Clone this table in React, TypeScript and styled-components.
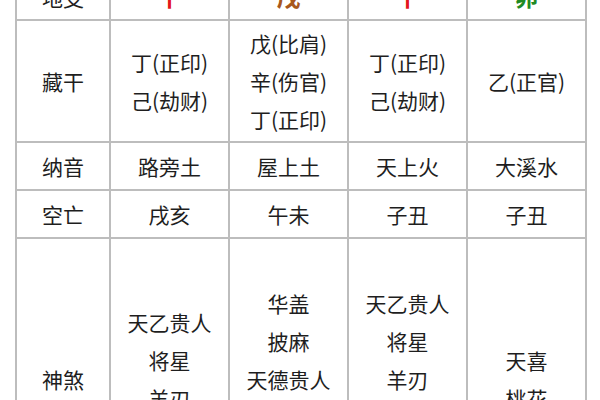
import React from 'react'
import styled, { createGlobalStyle } from 'styled-components'

const GlobalStyle = createGlobalStyle`
  html, body {
    margin: 0;
    padding: 0;
    background: #fff;
    overflow: hidden;
  }
  body {
    font-family: "Noto Sans CJK SC", "Noto Sans", sans-serif;
    color: #1e1e1e;
  }
`

const Page = styled.div`
  width: 600px;
  height: 400px;
  overflow: hidden;
  padding-left: 15px;
  box-sizing: border-box;
`

const Table = styled.table`
  border-collapse: collapse;
  table-layout: fixed;
  width: 572px;
  margin-top: -28px;
`

const Row = styled.tr<{ $h: number }>`
  height: ${({ $h }) => $h}px;
`

const Cell = styled.td<{ $w?: number }>`
  border: 2px solid #bdbdbd;
  padding: 0;
  text-align: center;
  vertical-align: middle;
  font-size: 21px;
  line-height: 38px;
  width: ${({ $w }) => ($w ? `${$w}px` : 'auto')};
`

const Zhi = styled.span<{ $color: string }>`
  color: ${({ $color }) => $color};
  font-size: 24px;
  font-weight: 700;
`

const Entry = styled.div`
  white-space: nowrap;
`

type Line = { label: string; cols: string[][]; h: number }

const pillars = [
  { zhi: '午', color: '#e3171b' },
  { zhi: '戌', color: '#a8581c' },
  { zhi: '午', color: '#e3171b' },
  { zhi: '卯', color: '#1f8a23' },
]

const lines: Line[] = [
  {
    label: '藏干',
    h: 122,
    cols: [
      ['丁(正印)', '己(劫财)'],
      ['戊(比肩)', '辛(伤官)', '丁(正印)'],
      ['丁(正印)', '己(劫财)'],
      ['乙(正官)'],
    ],
  },
  { label: '纳音', h: 48, cols: [['路旁土'], ['屋上土'], ['天上火'], ['大溪水']] },
  { label: '空亡', h: 48, cols: [['戌亥'], ['午未'], ['子丑'], ['子丑']] },
  {
    label: '神煞',
    h: 282,
    cols: [
      ['天乙贵人', '将星', '羊刃', '红艳'],
      ['华盖', '披麻', '天德贵人', '月德贵人', '寡宿'],
      ['天乙贵人', '将星', '羊刃', '红艳', '灾煞'],
      ['天喜', '桃花'],
    ],
  },
]

export default function App() {
  return (
    <Page>
      <GlobalStyle />
      <Table>
        <tbody>
          <Row $h={47}>
            <Cell $w={92}>地支</Cell>
            {pillars.map((p, i) => (
              <Cell key={i}>
                <Zhi $color={p.color}>{p.zhi}</Zhi>
              </Cell>
            ))}
          </Row>
          {lines.map((l) => (
            <Row key={l.label} $h={l.h}>
              <Cell $w={92}>{l.label}</Cell>
              {l.cols.map((c, i) => (
                <Cell key={i}>
                  {c.map((e, j) => (
                    <Entry key={j}>{e}</Entry>
                  ))}
                </Cell>
              ))}
            </Row>
          ))}
        </tbody>
      </Table>
    </Page>
  )
}
